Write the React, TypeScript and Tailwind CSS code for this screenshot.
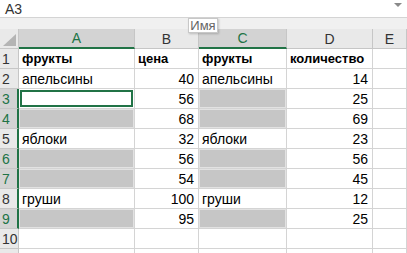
const cols = ['A', 'B', 'C', 'D', 'E'];
const selectedCols = ['A', 'C'];

type Cell = { v?: string; bold?: boolean; num?: boolean; gray?: boolean; active?: boolean };

const rows: { n: number | null; sel: boolean; cells: Cell[] }[] = [
  { n: 1, sel: false, cells: [{ v: 'фрукты', bold: true }, { v: 'цена', bold: true }, { v: 'фрукты', bold: true }, { v: 'количество', bold: true }, {}] },
  { n: 2, sel: false, cells: [{ v: 'апельсины' }, { v: '40', num: true }, { v: 'апельсины' }, { v: '14', num: true }, {}] },
  { n: 3, sel: true, cells: [{ active: true }, { v: '56', num: true }, { gray: true }, { v: '25', num: true }, {}] },
  { n: 4, sel: true, cells: [{ gray: true }, { v: '68', num: true }, { gray: true }, { v: '69', num: true }, {}] },
  { n: 5, sel: false, cells: [{ v: 'яблоки' }, { v: '32', num: true }, { v: 'яблоки' }, { v: '23', num: true }, {}] },
  { n: 6, sel: true, cells: [{ gray: true }, { v: '56', num: true }, { gray: true }, { v: '56', num: true }, {}] },
  { n: 7, sel: true, cells: [{ gray: true }, { v: '54', num: true }, { gray: true }, { v: '45', num: true }, {}] },
  { n: 8, sel: false, cells: [{ v: 'груши' }, { v: '100', num: true }, { v: 'груши' }, { v: '12', num: true }, {}] },
  { n: 9, sel: true, cells: [{ gray: true }, { v: '95', num: true }, { gray: true }, { v: '25', num: true }, {}] },
  { n: 10, sel: false, cells: [{}, {}, {}, {}, {}] },
  { n: null, sel: false, cells: [{}, {}, {}, {}, {}] },
];

const grid = 'grid grid-cols-[19px_116px_64px_88px_86px_1fr]';

export default function App() {
  return (
    <div className="relative h-[253px] w-[407px] overflow-hidden bg-white text-[14px] text-black" style={{ fontFamily: '"Liberation Sans", Arial, sans-serif' }}>
      {/* name box bar */}
      <div className="flex h-[18px] items-center justify-between border-b border-[#d4d4d4] bg-white pl-[5px] pr-[5px]">
        <span className="text-[14px] leading-none text-[#333]">A3</span>
        <svg width="8" height="5" viewBox="0 0 8 5" className="mb-[6px]">
          <path d="M0 0 L8 0 L4 4 Z" fill="#8a8a8a" />
        </svg>
      </div>
      <div className="h-[11px] bg-[#f0f0f0]" />

      {/* column headers */}
      <div className={`${grid} h-[20px] bg-[#e9e9e9]`}>
        <div className="relative border-r border-b border-[#c6c6c6] bg-[#e9e9e9]">
          <svg width="13" height="12" viewBox="0 0 13 12" className="absolute bottom-[2px] right-[2px]">
            <path d="M13 0 L13 12 L0 12 Z" fill="#b4b4b4" />
          </svg>
        </div>
        {cols.map((c) => {
          const sel = selectedCols.includes(c);
          return (
            <div
              key={c}
              className={`flex items-center justify-center border-r border-[#c6c6c6] leading-none ${
                sel ? 'border-b-2 border-b-[#217346] bg-[#d3d3d3] text-[#217346]' : 'border-b border-b-[#c6c6c6] text-[#333]'
              }`}
            >
              {c}
            </div>
          );
        })}
      </div>

      {/* rows */}
      {rows.map((r, ri) => (
        <div key={ri} className={`${grid} h-[20px]`}>
          <div
            className={`flex items-center pl-[2px] leading-none border-b border-[#c6c6c6] ${
              r.n !== null && r.n >= 3 && r.n <= 9 ? 'border-r-2 border-r-[#217346]' : 'border-r border-r-[#c6c6c6]'
            } ${r.sel ? 'bg-[#d3d3d3] text-[#217346]' : 'bg-[#e9e9e9] text-[#333]'}`}
          >
            {r.n}
          </div>
          {r.cells.map((c, i) => (
            <div
              key={i}
              className={`flex items-center overflow-hidden whitespace-nowrap border-r border-b border-[#d4d4d4] leading-none ${
                c.num ? 'justify-end pr-[4px]' : 'pl-[3px]'
              } ${c.bold ? 'text-[13px] font-bold' : ''} ${c.gray ? 'bg-[#c6c6c6] shadow-[inset_0_0_0_1px_#e2e2e2]' : ''}`}
            >
              {c.active ? <div className="-ml-[2px] h-[17px] w-[113px] border-2 border-[#217346] bg-white" /> : c.v}
            </div>
          ))}
        </div>
      ))}

      {/* tooltip */}
      <div className="absolute left-[188px] top-[18px] flex h-[15px] w-[30px] items-center justify-center border border-[#c8c8c8] bg-white text-[13px] leading-none text-[#666] shadow-[1px_1px_2px_rgba(0,0,0,0.2)]">
        Имя
      </div>
    </div>
  );
}
